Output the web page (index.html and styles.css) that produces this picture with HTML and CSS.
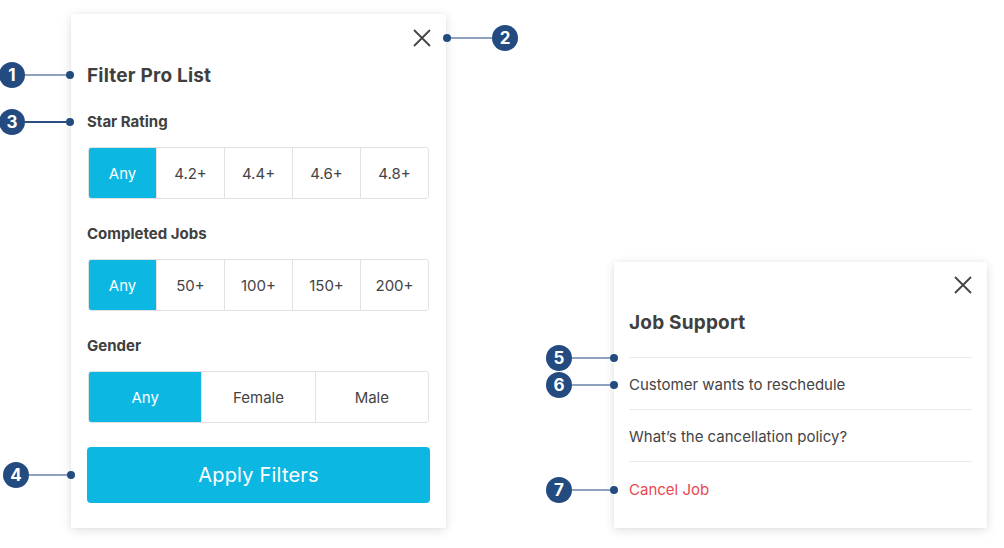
FILE: index.html
```html
<!DOCTYPE html>
<html>
<head>
<meta charset="utf-8">
<link rel="stylesheet" href="styles.css">
</head>
<body>
<div class="canvas">
  <section class="card filter">
    <div class="close-row">
      <svg class="close" viewBox="0 0 18 18" width="18" height="18"><path d="M1 1L17 17M17 1L1 17" stroke="#444" stroke-width="1.8" fill="none"/></svg>
    </div>
    <h1 class="title">Filter Pro List</h1>
    <h2 class="label first">Star Rating</h2>
    <div class="group five">
      <button class="opt active">Any</button>
      <button class="opt">4.2+</button>
      <button class="opt">4.4+</button>
      <button class="opt">4.6+</button>
      <button class="opt">4.8+</button>
    </div>
    <h2 class="label">Completed Jobs</h2>
    <div class="group five">
      <button class="opt active">Any</button>
      <button class="opt">50+</button>
      <button class="opt">100+</button>
      <button class="opt">150+</button>
      <button class="opt">200+</button>
    </div>
    <h2 class="label">Gender</h2>
    <div class="group three">
      <button class="opt active">Any</button>
      <button class="opt">Female</button>
      <button class="opt">Male</button>
    </div>
    <button class="apply">Apply Filters</button>
  </section>

  <section class="card support">
    <div class="close-row">
      <svg class="close" viewBox="0 0 18 18" width="18" height="18"><path d="M1 1L17 17M17 1L1 17" stroke="#444" stroke-width="1.8" fill="none"/></svg>
    </div>
    <h1 class="title">Job Support</h1>
    <ul class="list">
      <li>Customer wants to reschedule</li>
      <li>What’s the cancellation policy?</li>
      <li class="danger">Cancel Job</li>
    </ul>
  </section>

  <div class="anno a1"><span class="num">1</span><span class="line"></span><span class="dot"></span></div>
  <div class="anno a2 rev"><span class="num">2</span><span class="line"></span><span class="dot"></span></div>
  <div class="anno a3 dark"><span class="num">3</span><span class="line"></span><span class="dot"></span></div>
  <div class="anno a4"><span class="num">4</span><span class="line"></span><span class="dot"></span></div>
  <div class="anno a5"><span class="num">5</span><span class="line"></span><span class="dot"></span></div>
  <div class="anno a6"><span class="num">6</span><span class="line"></span><span class="dot"></span></div>
  <div class="anno a7"><span class="num">7</span><span class="line"></span><span class="dot"></span></div>
</div>
</body>
</html>
```

FILE: styles.css
```css
* { box-sizing: border-box; }
html, body { margin: 0; padding: 0; background: #fff; }
body { font-family: Inter, Lato, "Noto Sans", "Liberation Sans", sans-serif; color: #3f3f3f; }

.canvas {
  position: relative;
  width: 1004px;
  height: 548px;
  display: flex;
  align-items: flex-start;
  padding: 14px 0 0 71px;
  gap: 168px;
}

.card {
  background: #fff;
  box-shadow: 0 2px 10px rgba(0, 0, 0, 0.13), 0 0 1px rgba(0,0,0,0.08);
}

.close-row {
  display: flex;
  justify-content: flex-end;
  height: 18px;
}
.close { display: block; }

.title {
  margin: 17px 0 0;
  font-size: 19px;
  line-height: 24px;
  font-weight: 700;
  color: #3f3f3f;
  letter-spacing: 0.2px;
}

/* Filter card */
.filter {
  width: 375px;
  height: 514px;
  padding: 15px 16px 25px 16px;
}
.filter .close-row { margin-right: -1px; }

.label {
  margin: 25px 0 15px 0;
  font-size: 15px;
  line-height: 20px;
  font-weight: 700;
  color: #404040;
}
.label.first { margin-top: 24px; }

.group {
  display: flex;
  height: 52px;
  margin-left: 1px;
  width: 341px;
  border: 1px solid #e2e2e2;
  border-radius: 3px;
  overflow: hidden;
}
.opt {
  flex: 1 1 0;
  border: 0;
  border-left: 1px solid #e2e2e2;
  background: #fff;
  font-family: inherit;
  font-size: 15px;
  color: #444;
  padding: 0;
}
.opt:first-child { border-left: 0; }
.opt.active { background: #0cb7e2; color: #fff; }

.apply {
  display: block;
  width: 343px;
  height: 56px;
  margin-top: 24px;
  border: 0;
  border-radius: 4px;
  background: #0cb7e2;
  color: #fff;
  font-family: inherit;
  font-size: 20px;
  letter-spacing: 0.2px;
}

/* Support card */
.support {
  width: 373px;
  height: 266px;
  margin-top: 248px;
  padding: 14px 15px 14px 15px;
}
.list {
  list-style: none;
  margin: 22px 0 0;
  padding: 0;
  border-top: 1px solid #e7ebf0;
}
.list li {
  height: 52px;
  display: flex;
  align-items: center;
  padding-top: 2px;
  font-size: 15px;
  color: #444;
  border-bottom: 1px solid #e7ebf0;
}
.list li:last-child { border-bottom: 0; }
.list li.danger { color: #e8474e; }

/* Annotations */
.anno {
  position: absolute;
  display: flex;
  align-items: center;
  height: 26px;
  width: 75px;
}
.anno.rev { flex-direction: row-reverse; }
.num {
  flex: none;
  width: 26px;
  height: 26px;
  border-radius: 50%;
  background: #234b80;
  color: #fff;
  font-family: Inter, "Noto Sans", sans-serif;
  font-weight: 700;
  font-size: 17px;
  line-height: 26px;
  text-align: center;
}
.line {
  flex: 1 1 auto;
  height: 1.5px;
  background: #8ea2c0;
}
.dark .line { background: #2b4f82; }
.dot {
  flex: none;
  width: 8px;
  height: 8px;
  border-radius: 50%;
  background: #234b80;
}

.a1 { left: -1px; top: 62px; }
.a2 { left: 443px; top: 25px; }
.a3 { left: -1px; top: 109px; }
.a4 { left: 3px; top: 462px; width: 72px; }
.a5 { left: 546px; top: 345px; width: 72px; }
.a6 { left: 546px; top: 372px; width: 72px; }
.a7 { left: 546px; top: 477px; width: 72px; }
```
